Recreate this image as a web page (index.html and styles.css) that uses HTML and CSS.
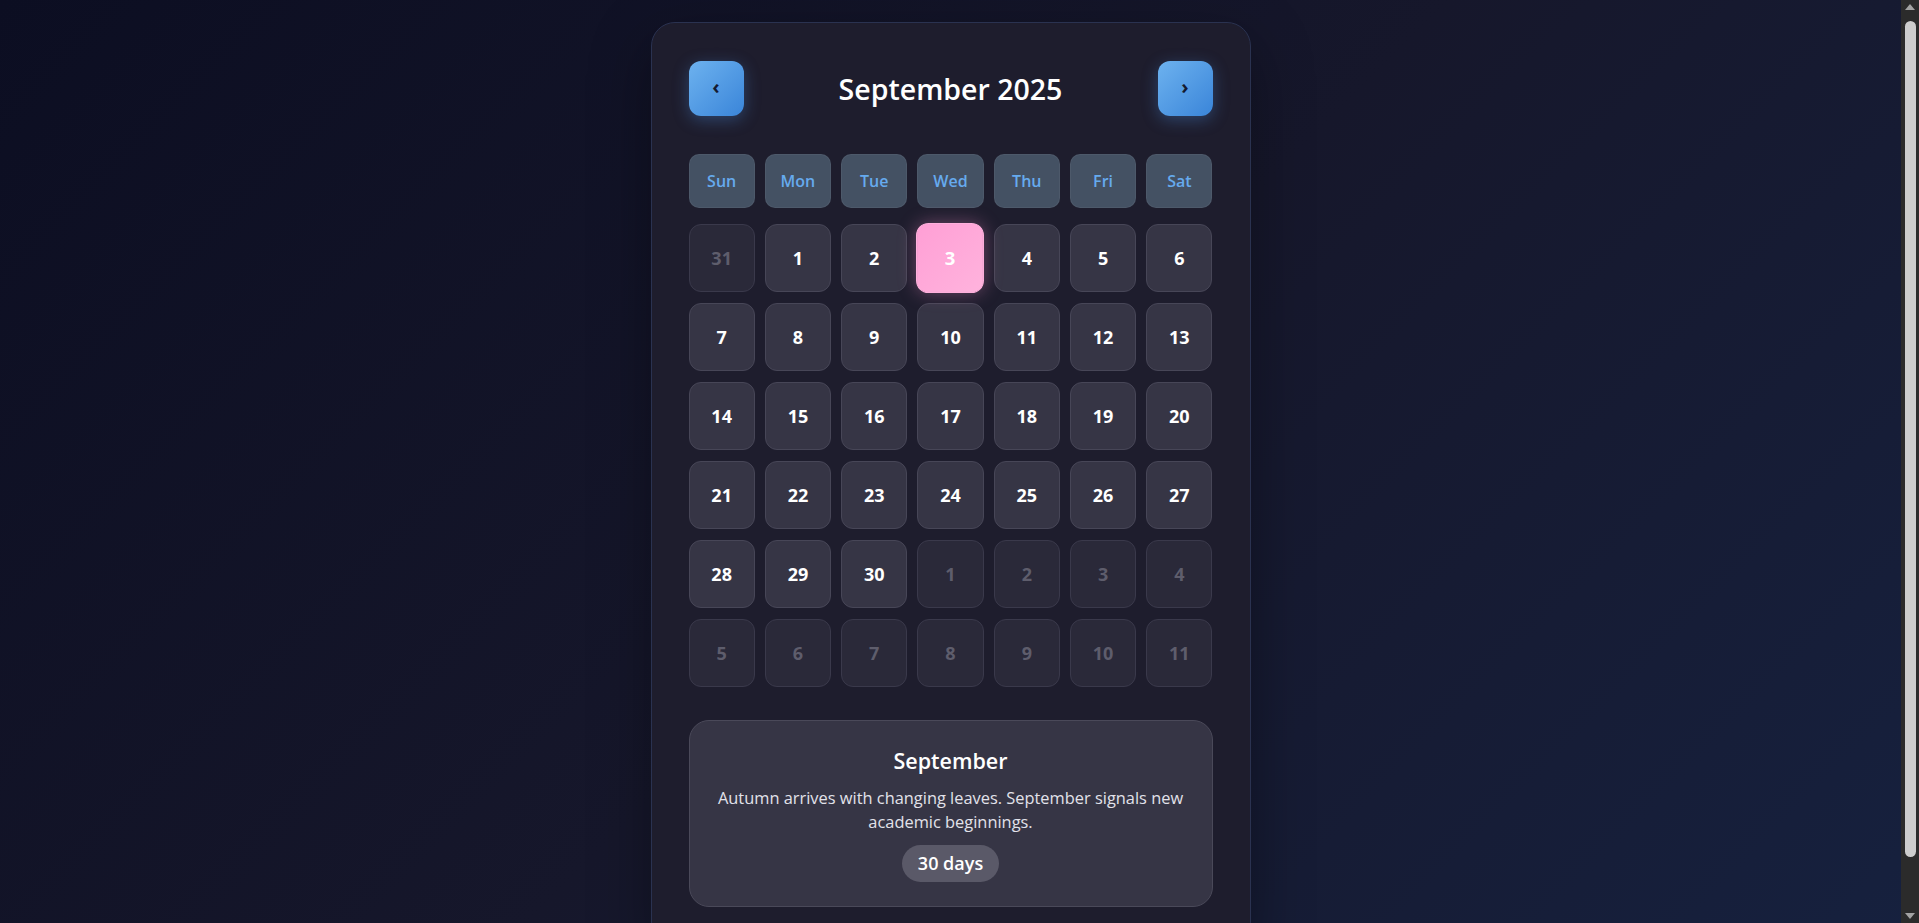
FILE: index.html
```html
<!DOCTYPE html>
<html lang="en">
<head>
<meta charset="utf-8">
<title>Calendar</title>
<link rel="stylesheet" href="styles.css">
</head>
<body>
<main class="calendar">
  <header class="cal-header">
    <button class="nav-btn" aria-label="Previous month">&#8249;</button>
    <h1 class="cal-title">September 2025</h1>
    <button class="nav-btn" aria-label="Next month">&#8250;</button>
  </header>

  <div class="weekdays">
    <div class="weekday">Sun</div>
    <div class="weekday">Mon</div>
    <div class="weekday">Tue</div>
    <div class="weekday">Wed</div>
    <div class="weekday">Thu</div>
    <div class="weekday">Fri</div>
    <div class="weekday">Sat</div>
  </div>

  <div class="days">
    <div class="day other">31</div>
    <div class="day">1</div>
    <div class="day">2</div>
    <div class="day today">3</div>
    <div class="day">4</div>
    <div class="day">5</div>
    <div class="day">6</div>
    <div class="day">7</div>
    <div class="day">8</div>
    <div class="day">9</div>
    <div class="day">10</div>
    <div class="day">11</div>
    <div class="day">12</div>
    <div class="day">13</div>
    <div class="day">14</div>
    <div class="day">15</div>
    <div class="day">16</div>
    <div class="day">17</div>
    <div class="day">18</div>
    <div class="day">19</div>
    <div class="day">20</div>
    <div class="day">21</div>
    <div class="day">22</div>
    <div class="day">23</div>
    <div class="day">24</div>
    <div class="day">25</div>
    <div class="day">26</div>
    <div class="day">27</div>
    <div class="day">28</div>
    <div class="day">29</div>
    <div class="day">30</div>
    <div class="day other">1</div>
    <div class="day other">2</div>
    <div class="day other">3</div>
    <div class="day other">4</div>
    <div class="day other">5</div>
    <div class="day other">6</div>
    <div class="day other">7</div>
    <div class="day other">8</div>
    <div class="day other">9</div>
    <div class="day other">10</div>
    <div class="day other">11</div>
  </div>

  <section class="info">
    <h2 class="info-title">September</h2>
    <p class="info-desc">Autumn arrives with changing leaves. September signals new academic beginnings.</p>
    <span class="info-badge">30 days</span>
  </section>
</main>

<div class="scrollbar" aria-hidden="true">
  <span class="sb-arrow sb-up"></span>
  <span class="sb-thumb"></span>
  <span class="sb-arrow sb-down"></span>
</div>
</body>
</html>
```

FILE: styles.css
```css
* {
  box-sizing: border-box;
}

body {
  margin: 0;
  padding: 22px 38px 37px 20px;
  min-height: 100vh;
  font-family: "Open Sans", "Noto Sans", sans-serif;
  color: #ffffff;
  background: linear-gradient(135deg, #0c0e22 0%, #16172b 50%, #16213f 100%);
  display: flex;
  justify-content: center;
  align-items: flex-start;
}

.calendar {
  width: 600px;
  padding: 38px 37px;
  background: #1e1d2d;
  border: 1px solid #2a3250;
  border-radius: 24px;
  box-shadow: 0 20px 60px rgba(0, 0, 0, 0.35);
}

.cal-header {
  display: flex;
  align-items: center;
  justify-content: space-between;
  height: 55px;
  margin-bottom: 38px;
}

.nav-btn {
  width: 55px;
  height: 55px;
  border: none;
  border-radius: 12px;
  background: linear-gradient(135deg, #6db2ef 0%, #3a85d9 100%);
  box-shadow: 0 4px 16px rgba(74, 144, 226, 0.35);
  color: #141a30;
  font-family: "Open Sans", sans-serif;
  font-size: 20px;
  font-weight: 700;
  line-height: 1;
  padding: 0 0 3px;
  display: flex;
  align-items: center;
  justify-content: center;
}

.cal-title {
  margin: 0;
  font-size: 28.5px;
  font-weight: 600;
  color: #ffffff;
}

.weekdays {
  display: grid;
  grid-template-columns: repeat(7, 1fr);
  column-gap: 10px;
  margin-bottom: 16px;
}

.weekday {
  height: 54px;
  border-radius: 10px;
  background: #445163;
  border: 1px solid rgba(255, 255, 255, 0.05);
  color: #66aaee;
  font-size: 16px;
  font-weight: 600;
  display: flex;
  align-items: center;
  justify-content: center;
}

.days {
  display: grid;
  grid-template-columns: repeat(7, 1fr);
  column-gap: 10px;
  row-gap: 11px;
}

.day {
  height: 68px;
  border-radius: 12px;
  background: #363545;
  border: 1px solid #474657;
  color: #ffffff;
  font-size: 18px;
  font-weight: 700;
  display: flex;
  align-items: center;
  justify-content: center;
}

.day.other {
  background: #2a2939;
  border-color: #3a394b;
  color: #5e5d6c;
}

.day.today {
  background: linear-gradient(135deg, #ff9fd5 0%, #ffb3dd 100%);
  border-color: #ffb0dc;
  box-shadow: 0 0 18px rgba(255, 150, 210, 0.35);
  transform: scale(1.03);
}

.info {
  margin-top: 33px;
  height: 187px;
  padding: 24px 18px;
  border-radius: 20px;
  background: #363545;
  border: 1px solid #4a4959;
  display: flex;
  flex-direction: column;
  align-items: center;
  text-align: center;
}

.info-title {
  margin: 0 0 9px;
  font-size: 21.5px;
  font-weight: 600;
  line-height: 32px;
}

.info-desc {
  margin: 0 0 11px;
  font-size: 16.4px;
  line-height: 24px;
  color: #e2e2ea;
}

.info-badge {
  display: inline-block;
  padding: 5px 16px;
  border-radius: 999px;
  background: #5a5968;
  font-size: 18px;
  font-weight: 600;
  line-height: 27px;
  color: #ffffff;
}

/* static scrollbar as in the screenshot */
.scrollbar {
  position: fixed;
  top: 0;
  right: 0;
  width: 18px;
  height: 100vh;
  background: #2b2b2b;
}

.sb-thumb {
  position: absolute;
  top: 21px;
  left: 4px;
  width: 11px;
  height: 836px;
  border-radius: 6px;
  background: #cdcdcd;
}

.sb-arrow {
  position: absolute;
  left: 4px;
  width: 0;
  height: 0;
  border-left: 5px solid transparent;
  border-right: 5px solid transparent;
}

.sb-up {
  top: 4px;
  border-bottom: 6px solid #a3a3a3;
}

.sb-down {
  bottom: 4px;
  border-top: 6px solid #a3a3a3;
}
```
